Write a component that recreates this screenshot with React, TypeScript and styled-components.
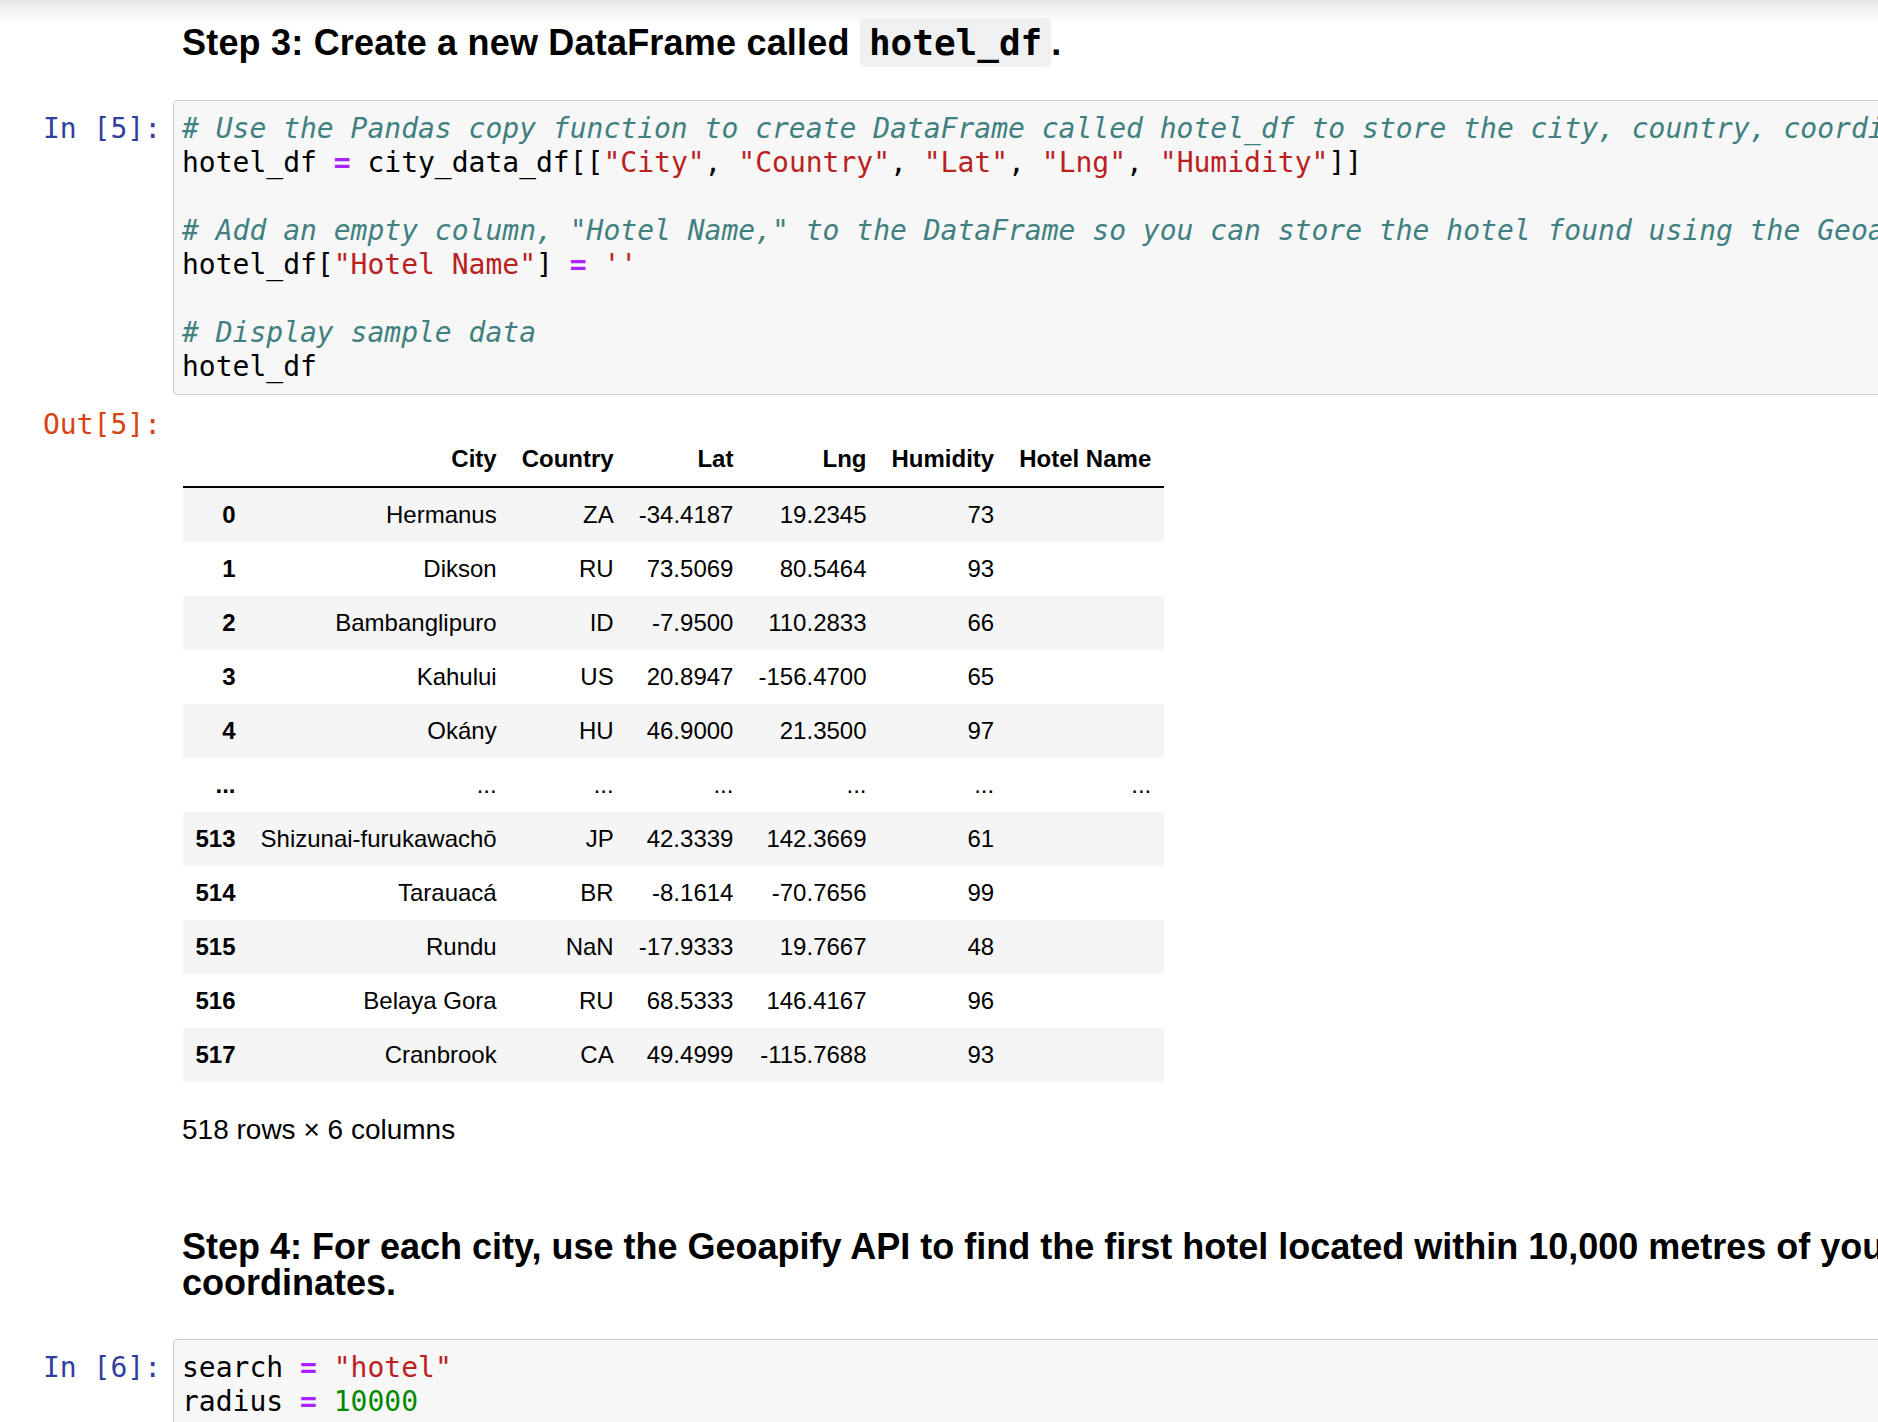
import React from 'react';
import styled, { createGlobalStyle } from 'styled-components';

const GlobalStyle = createGlobalStyle`
  html, body { margin: 0; padding: 0; background: #ffffff; }
  body { overflow: hidden; }
`;

const Page = styled.div`
  width: 1878px;
  height: 1422px;
  overflow: hidden;
  background: linear-gradient(to bottom, #e4e4e4 0px, #f4f4f4 10px, #ffffff 26px);
`;

const Notebook = styled.div`
  width: 2040px;
  display: flex;
  flex-direction: column;
`;

const MarkdownCell = styled.div<{ $mt: number }>`
  margin-top: ${(p) => p.$mt}px;
  padding-left: 182px;
  padding-right: 30px;
`;

const Heading = styled.h3`
  margin: 0;
  font-family: "Liberation Sans", Arial, sans-serif;
  font-weight: bold;
  font-size: 36px;
  line-height: 36px;
  color: #000000;
`;

const HeadText = styled.span<{ $spacing?: number }>`
  letter-spacing: ${(p) => p.$spacing ?? 0}px;
`;

const InlineCode = styled.code`
  font-family: "DejaVu Sans Mono", monospace;
  font-size: 36px;
  background: #eff0f1;
  padding: 4px 9px;
  border-radius: 4px;
`;

const CellRow = styled.div<{ $mt?: number }>`
  display: flex;
  align-items: flex-start;
  margin-top: ${(p) => p.$mt ?? 0}px;
`;

const Prompt = styled.div<{ $kind: 'in' | 'out' }>`
  flex: 0 0 173px;
  box-sizing: border-box;
  padding: ${(p) => (p.$kind === 'in' ? 12 : 13)}px 12px 0 0;
  text-align: right;
  font-family: "DejaVu Sans Mono", monospace;
  font-size: 28px;
  line-height: 34px;
  white-space: pre;
  color: ${(p) => (p.$kind === 'in' ? '#303F9F' : '#D84315')};
`;

const CodeBox = styled.div`
  flex: 1;
  min-width: 0;
  background: #f7f7f7;
  border: 1px solid #cfcfcf;
  border-radius: 4px;
  padding: 11px 8px 10px 8px;
  font-family: "DejaVu Sans Mono", monospace;
  font-size: 28px;
  line-height: 34px;
  color: #000000;
  white-space: pre;
  overflow: hidden;
`;

const Line = styled.div`
  height: 34px;
`;

const Comment = styled.span`
  color: #408080;
  font-style: italic;
`;

const Str = styled.span`
  color: #ba2121;
`;

const Op = styled.span`
  color: #aa22ff;
  font-weight: bold;
`;

const Num = styled.span`
  color: #008800;
`;

const OutputBody = styled.div`
  flex: 1;
  padding: 37px 0 0 9px;
`;

const DataTable = styled.table`
  margin-left: 1px;
  border-collapse: collapse;
  border-spacing: 0;
  font-family: "Liberation Sans", Arial, sans-serif;
  font-size: 24px;
  color: #000000;

  th, td {
    padding: 12px 12.5px;
    line-height: 30px;
    text-align: right;
    vertical-align: middle;
    white-space: nowrap;
  }

  thead th {
    font-weight: bold;
    border-bottom: 2px solid #000000;
  }

  tbody th {
    font-weight: bold;
  }

  tbody tr:nth-child(odd) {
    background: #f5f5f5;
  }
`;

const Summary = styled.p`
  margin: 28px 0 0 0;
  font-family: "Liberation Sans", Arial, sans-serif;
  font-size: 28px;
  line-height: 40px;
  color: #000000;
`;

type RowData = [string, string, string, string, string, string, string];

const rows: RowData[] = [
  ['0', 'Hermanus', 'ZA', '-34.4187', '19.2345', '73', ''],
  ['1', 'Dikson', 'RU', '73.5069', '80.5464', '93', ''],
  ['2', 'Bambanglipuro', 'ID', '-7.9500', '110.2833', '66', ''],
  ['3', 'Kahului', 'US', '20.8947', '-156.4700', '65', ''],
  ['4', 'Okány', 'HU', '46.9000', '21.3500', '97', ''],
  ['...', '...', '...', '...', '...', '...', '...'],
  ['513', 'Shizunai-furukawachō', 'JP', '42.3339', '142.3669', '61', ''],
  ['514', 'Tarauacá', 'BR', '-8.1614', '-70.7656', '99', ''],
  ['515', 'Rundu', 'NaN', '-17.9333', '19.7667', '48', ''],
  ['516', 'Belaya Gora', 'RU', '68.5333', '146.4167', '96', ''],
  ['517', 'Cranbrook', 'CA', '49.4999', '-115.7688', '93', ''],
];

const headers = ['', 'City', 'Country', 'Lat', 'Lng', 'Humidity', 'Hotel Name'];

export default function App() {
  return (
    <Page>
      <GlobalStyle />
      <Notebook>
        <MarkdownCell $mt={25}>
          <Heading>
            <HeadText $spacing={0.2}>Step 3: Create a new DataFrame called </HeadText>
            <InlineCode>hotel_df</InlineCode>.
          </Heading>
        </MarkdownCell>

        <CellRow $mt={39}>
          <Prompt $kind="in">In [5]:</Prompt>
          <CodeBox>
            <Line>
              <Comment># Use the Pandas copy function to create DataFrame called hotel_df to store the city, country, coordinates, and humidity</Comment>
            </Line>
            <Line>
              hotel_df <Op>=</Op> city_data_df[[<Str>"City"</Str>, <Str>"Country"</Str>, <Str>"Lat"</Str>, <Str>"Lng"</Str>, <Str>"Humidity"</Str>]]
            </Line>
            <Line />
            <Line>
              <Comment># Add an empty column, "Hotel Name," to the DataFrame so you can store the hotel found using the Geoapify API</Comment>
            </Line>
            <Line>
              hotel_df[<Str>"Hotel Name"</Str>] <Op>=</Op> <Str>''</Str>
            </Line>
            <Line />
            <Line>
              <Comment># Display sample data</Comment>
            </Line>
            <Line>hotel_df</Line>
          </CodeBox>
        </CellRow>

        <CellRow>
          <Prompt $kind="out">Out[5]:</Prompt>
          <OutputBody>
            <DataTable>
              <thead>
                <tr>
                  {headers.map((h, i) => (
                    <th key={i}>{h}</th>
                  ))}
                </tr>
              </thead>
              <tbody>
                {rows.map((r) => (
                  <tr key={r[0] + r[1]}>
                    <th>{r[0]}</th>
                    {r.slice(1).map((c, j) => (
                      <td key={j}>{c}</td>
                    ))}
                  </tr>
                ))}
              </tbody>
            </DataTable>
            <Summary>518 rows × 6 columns</Summary>
          </OutputBody>
        </CellRow>

        <MarkdownCell $mt={79}>
          <Heading>
            Step 4: For each city, use the Geoapify API to find the first hotel located within 10,000 metres of your coordinates.
          </Heading>
        </MarkdownCell>

        <CellRow $mt={38}>
          <Prompt $kind="in">In [6]:</Prompt>
          <CodeBox>
            <Line>
              search <Op>=</Op> <Str>"hotel"</Str>
            </Line>
            <Line>
              radius <Op>=</Op> <Num>10000</Num>
            </Line>
            <Line />
            <Line>params <Op>=</Op> {'{'}</Line>
            <Line>
              {'    '}<Str>"categories"</Str>:search,
            </Line>
            <Line>{'}'}</Line>
          </CodeBox>
        </CellRow>
      </Notebook>
    </Page>
  );
}
